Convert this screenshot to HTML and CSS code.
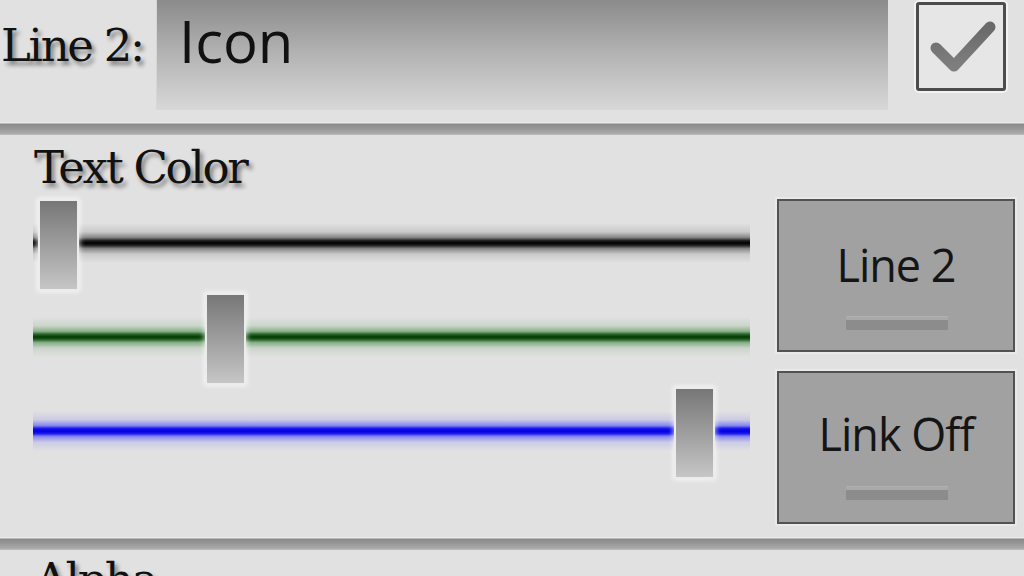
FILE: index.html
```html
<!DOCTYPE html>
<html>
<head>
<meta charset="utf-8">
<link rel="stylesheet" href="styles.css">
</head>
<body>
<div class="screen">
  <div class="top-row">
    <div class="label">Line 2:</div>
    <div class="field">Icon</div>
    <div class="check-wrap">
      <div class="checkbox">
        <svg width="84" height="83" viewBox="0 0 84 83">
          <defs>
            <linearGradient id="cg" x1="0" y1="0" x2="0" y2="1">
              <stop offset="0" stop-color="#6a6a6a"/>
              <stop offset="1" stop-color="#7e7e7e"/>
            </linearGradient>
          </defs>
          <path d="M17 43 L35 61 L71 22" fill="none" stroke="url(#cg)" stroke-width="11" stroke-linecap="round" stroke-linejoin="round"/>
        </svg>
      </div>
    </div>
  </div>
  <div class="divider"></div>
  <div class="section">
    <div class="title">Text Color</div>
    <div class="controls">
      <div class="sliders">
        <div class="slider-row">
          <div class="track track-black"></div>
          <div class="thumb" style="left:7px"></div>
        </div>
        <div class="slider-row">
          <div class="track track-green"></div>
          <div class="thumb" style="left:174px"></div>
        </div>
        <div class="slider-row">
          <div class="track track-blue"></div>
          <div class="thumb" style="left:643px"></div>
        </div>
      </div>
      <div class="buttons">
        <div class="btn btn-first"><span class="btn-text">Line 2</span><span class="btn-bar"></span></div>
        <div class="btn btn-second"><span class="btn-text">Link Off</span><span class="btn-bar"></span></div>
      </div>
    </div>
  </div>
  <div class="divider"></div>
  <div class="section2">
    <div class="title2">Alpha</div>
  </div>
</div>
</body>
</html>
```
FILE: styles.css
```css
html, body {
  margin: 0;
  padding: 0;
  background: #e1e1e1;
}
.screen {
  width: 1024px;
  height: 576px;
  overflow: hidden;
  background: #e1e1e1;
}
.top-row {
  display: flex;
  height: 122px;
}
.label {
  width: 155px;
  padding-left: 1px;
  padding-top: 4px;
  font-family: "DejaVu Serif", serif;
  font-size: 45px;
  letter-spacing: -2.3px;
  line-height: 84px;
  color: #111;
  text-shadow: 3px 4px 4px rgba(0,0,0,0.45);
}
.field {
  width: 732px;
  height: 110px;
  box-sizing: border-box;
  padding-left: 22px;
  background: linear-gradient(to bottom, #8b8b8b 0%, #b4b4b4 50%, #d8d8d8 100%);
  border-left: 1px solid #d6d6d6;
  font-family: "Open Sans", sans-serif;
  font-size: 58px;
  line-height: 82px;
  color: #111;
}
.check-wrap {
  flex: 1;
  display: flex;
  padding-top: 2px;
  padding-left: 28px;
}
.checkbox {
  width: 90px;
  height: 89px;
  box-sizing: border-box;
  border: 3px solid #4c4c4c;
  border-radius: 3px;
  background: #e6e6e6;
  box-shadow: 0 0 0 2px #f2f2f2;
}
.checkbox svg {
  display: block;
}
.divider {
  height: 13px;
  background: linear-gradient(to bottom, #e9e9e9 0px, #e9e9e9 1px, #8a8a8a 2px, #959595 6px, #adadad 12px, #c4c4c4 13px);
}
.section {
  height: 402px;
}
.title {
  padding-top: 2px;
  padding-left: 34px;
  height: 61px;
  font-family: "DejaVu Serif", serif;
  font-size: 45px;
  letter-spacing: -2.3px;
  line-height: 61px;
  color: #111;
  text-shadow: 3px 4px 4px rgba(0,0,0,0.45);
}
.controls {
  display: flex;
}
.sliders {
  margin-left: 33px;
  width: 717px;
  display: flex;
  flex-direction: column;
}
.slider-row {
  position: relative;
  height: 94px;
}
.track {
  position: absolute;
  left: 0;
  right: 0;
  top: 25px;
  height: 40px;
}
.track-black {
  background: linear-gradient(to bottom,
    rgba(0,0,0,0) 0%, rgba(0,0,0,0.1) 22%, rgba(0,0,0,0.4) 36%,
    rgba(0,0,0,0.85) 44%, #000 50%, rgba(0,0,0,0.85) 56%,
    rgba(0,0,0,0.4) 64%, rgba(0,0,0,0.1) 78%, rgba(0,0,0,0) 100%);
}
.track-green {
  background: linear-gradient(to bottom,
    rgba(0,100,0,0) 0%, rgba(0,110,0,0.1) 22%, rgba(0,100,0,0.4) 36%,
    rgba(0,70,0,0.85) 44%, #003a00 50%, rgba(0,70,0,0.85) 56%,
    rgba(0,100,0,0.4) 64%, rgba(0,110,0,0.1) 78%, rgba(0,100,0,0) 100%);
}
.track-blue {
  background: linear-gradient(to bottom,
    rgba(30,30,255,0) 0%, rgba(40,40,255,0.12) 22%, rgba(30,30,255,0.45) 36%,
    rgba(10,10,240,0.95) 44%, #0000dc 50%, rgba(10,10,240,0.95) 56%,
    rgba(30,30,255,0.45) 64%, rgba(40,40,255,0.12) 78%, rgba(30,30,255,0) 100%);
}
.thumb {
  position: absolute;
  top: 3px;
  width: 37px;
  height: 88px;
  box-sizing: border-box;
  background: linear-gradient(to bottom, #777 0%, #9a9a9a 45%, #c6c6c6 100%);
  box-shadow: 0 0 0 2px #ececec, 0 0 5px 3px rgba(255,255,255,0.7);
}
.buttons {
  margin-left: 27px;
  margin-top: 1px;
  display: flex;
  flex-direction: column;
  gap: 19px;
}
.btn {
  position: relative;
  width: 238px;
  height: 153px;
  box-sizing: border-box;
  border: 2px solid #525252;
  background: #a1a1a1;
  box-shadow: 0 0 0 2px #e9e9e9;
  display: flex;
  flex-direction: column;
  align-items: center;
}
.btn-text {
  font-family: "Open Sans", sans-serif;
  font-size: 45px;
  color: #151515;
  letter-spacing: -1px;
  line-height: 70px;
}
.btn-first .btn-text {
  margin-top: 29px;
}
.btn-second .btn-text {
  margin-top: 26px;
}
.btn-bar {
  width: 102px;
  height: 10px;
  background: #8c8c8c;
  box-shadow: 0 -3px 0 0 #a9a9a9, 0 -4px 0 0 #b0b0b0;
  margin-left: 2px;
}
.btn-first .btn-bar { margin-top: 20px; }
.btn-second .btn-bar { margin-top: 21px; }
.section2 {
  padding-left: 35px;
}
.title2 {
  font-family: "DejaVu Serif", serif;
  font-size: 45px;
  letter-spacing: -2px;
  line-height: 60px;
  color: #111;
  text-shadow: 3px 4px 4px rgba(0,0,0,0.45);
}
```
